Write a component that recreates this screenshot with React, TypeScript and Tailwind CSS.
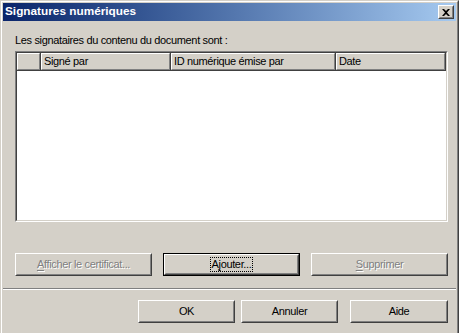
import React from "react";

const font = "font-['Tahoma','Liberation_Sans',Arial,sans-serif]";

function Raised({
  children,
  className = "",
}: {
  children: React.ReactNode;
  className?: string;
}) {
  return (
    <div
      className={`shrink-0 border border-t-white border-l-white border-r-[#404040] border-b-[#404040] ${className}`}
    >
      <div className="flex h-full w-full items-center justify-center border border-t-[#d4d0c8] border-l-[#d4d0c8] border-r-[#808080] border-b-[#808080]">
        {children}
      </div>
    </div>
  );
}

function Button({
  label,
  mnemonic,
  disabled = false,
  isDefault = false,
  width = "w-[137px]",
  className = "",
}: {
  label: string;
  mnemonic?: number;
  disabled?: boolean;
  isDefault?: boolean;
  width?: string;
  className?: string;
}) {
  const text =
    mnemonic === undefined ? (
      label
    ) : (
      <>
        {label.slice(0, mnemonic)}
        <span className="underline underline-offset-2">{label[mnemonic]}</span>
        {label.slice(mnemonic + 1)}
      </>
    );
  const content = (
    <span
      className={
        disabled
          ? "text-[#808080] [text-shadow:1px_1px_0_#fff]"
          : "text-black"
      }
    >
      {text}
    </span>
  );
  if (isDefault) {
    return (
      <div className={`h-[23px] shrink-0 ${width} border border-black ${className}`}>
        <Raised className="h-full w-full">
          <span className="border border-dotted border-black px-[1px] leading-[13px]">
            {content}
          </span>
        </Raised>
      </div>
    );
  }
  return <Raised className={`h-[23px] ${width} ${className}`}>{content}</Raised>;
}

function HeaderCell({ label, width }: { label: string; width: string }) {
  return (
    <div
      className={`${width} h-full shrink-0 border-r border-b border-r-[#404040] border-b-[#404040]`}
    >
      <div className="h-full border-t border-l border-r border-b border-t-white border-l-white border-r-[#808080] border-b-[#808080] pl-[2px] leading-[15px]">
        {label}
      </div>
    </div>
  );
}

export default function App() {
  return (
    <div
      className={`${font} h-[333px] w-[459px] overflow-hidden bg-[#d4d0c8] text-[11px] tracking-[-0.35px] text-black`}
    >
      <div className="h-full border-t border-l border-r border-t-[#d4d0c8] border-l-[#d4d0c8] border-r-[#404040]">
        <div className="flex h-full flex-col border-t border-l border-r border-t-white border-l-white border-r-[#808080] p-[1px]">
          {/* title bar */}
          <div className="flex h-[18px] shrink-0 items-center justify-between bg-gradient-to-r from-[#0a246a] to-[#a6caf0] pl-[2px] pr-[2px]">
            <span className="text-[11.8px] font-bold tracking-normal text-white">
              Signatures numériques
            </span>
            <Raised className="h-[14px] w-[16px] bg-[#d4d0c8]">
              <svg width="8" height="7" viewBox="0 0 8 7">
                <path
                  d="M0 0h2l2 2 2-2h2L5 3.5 8 7H6L4 5 2 7H0l3-3.5z"
                  fill="#000"
                />
              </svg>
            </Raised>
          </div>

          {/* body */}
          <div className="flex flex-col pl-[12px] pr-[8px]">
            <div className="mt-[12px] h-[18px] leading-[14px]">
              Les signataires du contenu du document sont :
            </div>
            <div className="h-[171px] w-[433px] border border-t-[#808080] border-l-[#808080] border-r-white border-b-white">
              <div className="h-full border border-t-[#404040] border-l-[#404040] border-r-[#d4d0c8] border-b-[#d4d0c8] bg-white">
                <div className="flex h-[18px] bg-[#d4d0c8]">
                  <HeaderCell label="" width="w-[24px]" />
                  <HeaderCell label="Signé par" width="w-[130px]" />
                  <HeaderCell label="ID numérique émise par" width="w-[165px]" />
                  <HeaderCell label="Date" width="w-[110px]" />
                </div>
              </div>
            </div>

            <div className="mt-[31px] flex gap-[11px]">
              <Button label="Afficher le certificat..." mnemonic={0} disabled />
              <Button label="Ajouter..." mnemonic={1} isDefault />
              <Button label="Supprimer" mnemonic={0} disabled />
            </div>
          </div>

          <div className="mt-[12px] h-[2px] border-t border-b border-t-[#808080] border-b-white" />

          <div className="mt-[10px] flex pl-[135px]">
            <Button label="OK" width="w-[97px]" />
            <Button label="Annuler" width="w-[97px]" className="ml-[6px]" />
            <Button label="Aide" width="w-[98px]" className="ml-[12px]" />
          </div>
        </div>
      </div>
    </div>
  );
}
